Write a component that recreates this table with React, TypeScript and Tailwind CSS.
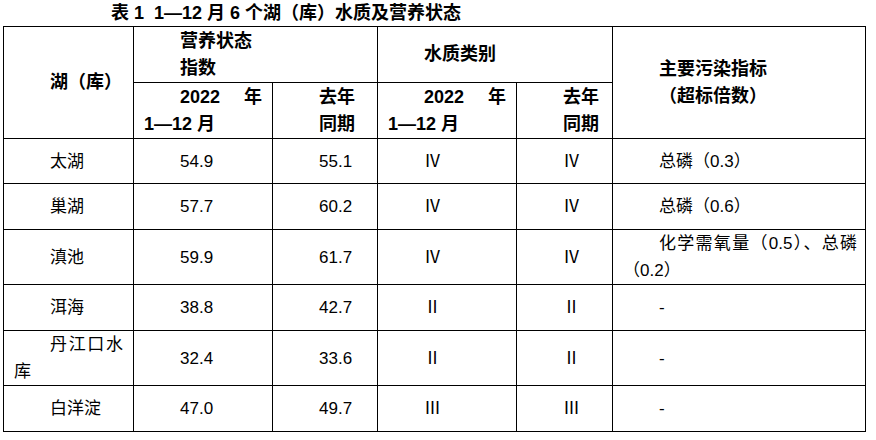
const rows = [
  { name: '太湖', idx: '54.9', last: '55.1', cls: 'Ⅳ', lastCls: 'Ⅳ', note: '总磷（0.3）', h: 'h-[45px]' },
  { name: '巢湖', idx: '57.7', last: '60.2', cls: 'Ⅳ', lastCls: 'Ⅳ', note: '总磷（0.6）', h: 'h-[46px]' },
  { name: '滇池', idx: '59.9', last: '61.7', cls: 'Ⅳ', lastCls: 'Ⅳ', note: '化学需氧量（0.5）、总磷（0.2）', h: 'h-[55px]' },
  { name: '洱海', idx: '38.8', last: '42.7', cls: 'Ⅱ', lastCls: 'Ⅱ', note: '-', h: 'h-[46px]' },
  { name: '丹江口水库', idx: '32.4', last: '33.6', cls: 'Ⅱ', lastCls: 'Ⅱ', note: '-', h: 'h-[55px]' },
  { name: '白洋淀', idx: '47.0', last: '49.7', cls: 'Ⅲ', lastCls: 'Ⅲ', note: '-', h: 'h-[46px]' },
];

const cell = 'border border-black px-[10px] py-0 align-middle text-justify';
const head = `${cell} text-left font-bold text-[18px]`;

const App = () => {
  return (
    <div className="w-[876px] h-[440px] bg-white text-black text-[17px] leading-[27px] font-['Liberation_Sans','Noto_Sans_CJK_SC',sans-serif]">
      <div className="h-[26px] leading-[26px] pl-[111px] font-bold text-[18px] whitespace-pre">
        表 1  1—12 月 6 个湖（库）水质及营养状态
      </div>
      <table className="ml-[3px] w-[862px] table-fixed border-collapse">
        <colgroup>
          <col className="w-[130px]" />
          <col className="w-[139px]" />
          <col className="w-[105px]" />
          <col className="w-[139px]" />
          <col className="w-[96px]" />
          <col className="w-[253px]" />
        </colgroup>
        <thead>
          <tr className="h-[56px]">
            <th rowSpan={2} className={`${head} indent-[36px]`}>湖（库）</th>
            <th colSpan={2} className={head}>
              <p className="pl-[36px]">营养状态</p>
              <p className="pl-[36px]">指数</p>
            </th>
            <th colSpan={2} className={`${head} indent-[36px]`}>水质类别</th>
            <th rowSpan={2} className={head}>
              <p className="pl-[36px]">主要污染指标</p>
              <p className="pl-[36px]">（超标倍数）</p>
            </th>
          </tr>
          <tr className="h-[56px]">
            <th className={head}>
              <div className="flex justify-between pl-[36px]">
                <span>2022</span>
                <span>年</span>
              </div>
              <div>1—12 月</div>
            </th>
            <th className={head}>
              <p className="pl-[36px]">去年</p>
              <p className="pl-[36px]">同期</p>
            </th>
            <th className={head}>
              <div className="flex justify-between pl-[36px]">
                <span>2022</span>
                <span>年</span>
              </div>
              <div>1—12 月</div>
            </th>
            <th className={head}>
              <p className="pl-[36px]">去年</p>
              <p className="pl-[36px]">同期</p>
            </th>
          </tr>
        </thead>
        <tbody>
          {rows.map((r) => (
            <tr key={r.name} className={r.h}>
              <td className={`${cell} indent-[36px]`}>{r.name}</td>
              <td className={`${cell} indent-[36px]`}>{r.idx}</td>
              <td className={`${cell} indent-[36px]`}>{r.last}</td>
              <td className={`${cell} indent-[36px]`}>{r.cls}</td>
              <td className={`${cell} indent-[36px]`}>{r.lastCls}</td>
              <td className={`${cell} indent-[36px] pr-[8px]`}>{r.note}</td>
            </tr>
          ))}
        </tbody>
      </table>
    </div>
  );
};

export default App;
